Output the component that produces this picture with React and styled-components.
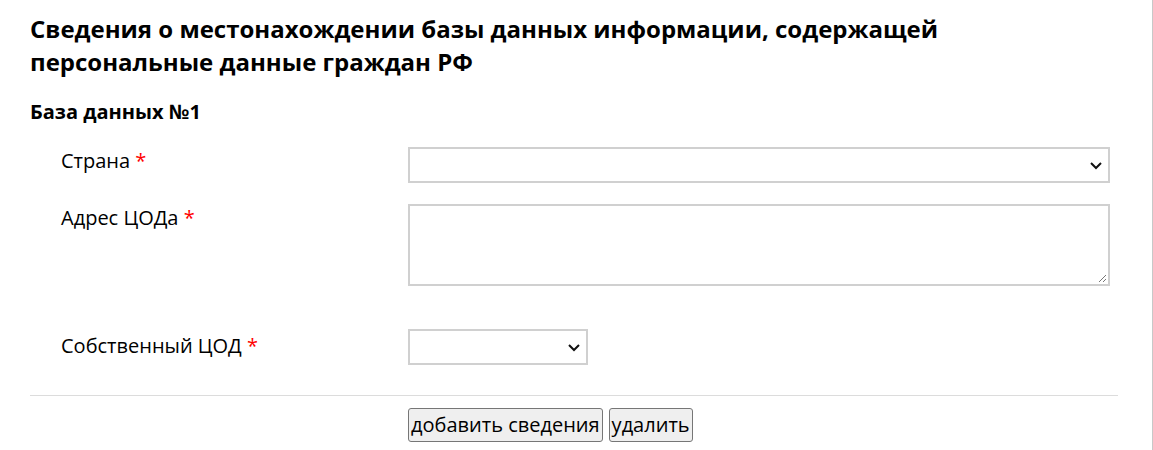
import React from 'react';
import styled, { createGlobalStyle } from 'styled-components';

const GlobalStyle = createGlobalStyle`
  body {
    margin: 0;
    background: #fff;
    font-family: "Open Sans", "Liberation Sans", sans-serif;
    color: #000;
  }
`;

const Page = styled.div`
  padding: 12px 35px 0 30px;
  border-right: 1px solid #c8c8c8;
  min-height: 450px;
  box-sizing: border-box;
`;

const Title = styled.h2`
  margin: 0;
  font-size: 24px;
  line-height: 33px;
  font-weight: 700;
  width: 960px;
`;

const SubTitle = styled.h3`
  margin: 20px 0 0;
  font-size: 20px;
  line-height: 27px;
  font-weight: 700;
`;

const Form = styled.div`
  display: grid;
  grid-template-columns: 347px 702px;
  row-gap: 21px;
  padding-left: 31px;
  margin-top: 22px;
`;

const Label = styled.label`
  font-size: 20px;
  line-height: 27px;
  padding-top: ${({ $top }) => $top || 0}px;
`;

const Required = styled.span`
  color: #f00;
`;

const Field = styled.div`
  display: flex;
  margin-bottom: ${({ $bottom }) => $bottom || 0}px;
`;

const Select = styled.div`
  width: ${({ $width }) => $width || '100%'};
  height: 36px;
  box-sizing: border-box;
  border: 2px solid #d0d0d0;
  background: #fff;
  display: flex;
  align-items: center;
  justify-content: flex-end;
  padding-right: 5px;
`;

const TextArea = styled.div`
  position: relative;
  width: 100%;
  height: 82px;
  box-sizing: border-box;
  border: 2px solid #d0d0d0;
  background: #fff;
`;

const Grip = styled.svg`
  position: absolute;
  right: 1px;
  bottom: 1px;
`;

const Divider = styled.hr`
  margin: 30px 0 0;
  border: 0;
  border-top: 1px solid #dcdcdc;
  width: 1088px;
`;

const Actions = styled.div`
  display: flex;
  gap: 6px;
  padding-left: 378px;
  margin-top: 12px;
`;

const Button = styled.button`
  font-family: "Open Sans", "Liberation Sans", sans-serif;
  font-size: 20px;
  line-height: 26px;
  padding: 3px 2px 3px 2px;
  color: #000;
  background: #efefef;
  border: 1px solid #767676;
  border-radius: 3px;
`;

const Chevron = () => (
  <svg width="14" height="9" viewBox="0 0 14 9">
    <path d="M2 2 L7 7 L12 2" fill="none" stroke="#111" strokeWidth="2" />
  </svg>
);

const App = () => (
  <>
    <GlobalStyle />
    <Page>
      <Title>
        Сведения о местонахождении базы данных информации, содержащей
        персональные данные граждан РФ
      </Title>
      <SubTitle>База данных №1</SubTitle>
      <Form>
        <Label>
          Страна <Required>*</Required>
        </Label>
        <Field>
          <Select>
            <Chevron />
          </Select>
        </Field>
        <Label>
          Адрес ЦОДа <Required>*</Required>
        </Label>
        <Field $bottom={22}>
          <TextArea>
            <Grip width="10" height="10" viewBox="0 0 10 10">
              <path d="M9 2 L2 9 M9 6 L6 9" stroke="#777" strokeWidth="1" />
            </Grip>
          </TextArea>
        </Field>
        <Label $top={3}>
          Собственный ЦОД <Required>*</Required>
        </Label>
        <Field>
          <Select $width="180px">
            <Chevron />
          </Select>
        </Field>
      </Form>
      <Divider />
      <Actions>
        <Button>добавить сведения</Button>
        <Button>удалить</Button>
      </Actions>
    </Page>
  </>
);

export default App;
